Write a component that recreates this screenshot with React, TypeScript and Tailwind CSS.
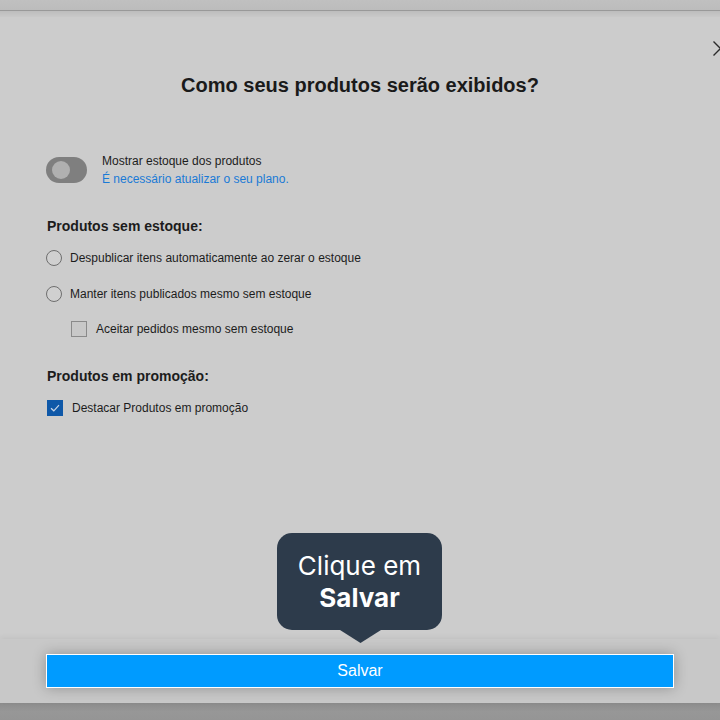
import React from "react";

export default function App() {
  return (
    <div className="relative w-[720px] h-[720px] overflow-hidden bg-[#cccccc] flex flex-col font-['Liberation_Sans',Arial,sans-serif] text-[#1c1c1c]">
      <div className="h-[10px] bg-gradient-to-b from-[#c0c0c0] to-[#bcbcbc]" />
      <div className="h-px bg-[#999999]" />
      <div className="h-[6px] bg-gradient-to-b from-[#bdbdbd] to-[#c9c9c9]" />

      <main className="relative flex-1 flex flex-col">
        <svg className="absolute left-[713px] top-[24px]" width="15" height="15" viewBox="0 0 15 15">
          <path d="M0.5 0.5 L14.5 14.5 M14.5 0.5 L0.5 14.5" stroke="#2a2a2a" strokeWidth="1.4" fill="none" />
        </svg>

        <h1 className="mt-[56px] h-[24px] leading-[24px] text-center text-[20px] font-bold text-[#1a1a1a]">
          Como seus produtos serão exibidos?
        </h1>

        <div className="mt-[55px] ml-[46px] flex items-center gap-[15px]">
          <div className="relative w-[41px] h-[26px] rounded-full bg-[#7f7f7f]">
            <div className="absolute left-[6px] top-[4px] w-[18px] h-[18px] rounded-full bg-[#b0b0b0]" />
          </div>
          <div className="flex flex-col text-[12px] leading-[18px]">
            <span>Mostrar estoque dos produtos</span>
            <span className="text-[#1a7ad6]">É necessário atualizar o seu plano.</span>
          </div>
        </div>

        <div className="mt-[28px] ml-[47px] h-[20px] leading-[20px] text-[14px] font-bold">
          Produtos sem estoque:
        </div>

        <div className="mt-[13px] ml-[46px] h-[18px] flex items-center gap-[8px] text-[12px]">
          <div className="w-[16px] h-[16px] rounded-full border border-[#6e6e6e] bg-[#d0d0d0]" />
          <span>Despublicar itens automaticamente ao zerar o estoque</span>
        </div>

        <div className="mt-[18px] ml-[46px] h-[18px] flex items-center gap-[8px] text-[12px]">
          <div className="w-[16px] h-[16px] rounded-full border border-[#6e6e6e] bg-[#d0d0d0]" />
          <span>Manter itens publicados mesmo sem estoque</span>
        </div>

        <div className="mt-[17px] ml-[71px] h-[18px] flex items-center gap-[9px] text-[12px]">
          <div className="w-[16px] h-[16px] border border-[#8a8a8a] bg-[#c8c8c8]" />
          <span>Aceitar pedidos mesmo sem estoque</span>
        </div>

        <div className="mt-[28px] ml-[47px] h-[20px] leading-[20px] text-[14px] font-bold">
          Produtos em promoção:
        </div>

        <div className="mt-[13px] ml-[47px] h-[18px] flex items-center gap-[9px] text-[12px]">
          <div className="w-[16px] h-[16px] bg-[#0e58a8] flex items-center justify-center">
            <svg width="10" height="8" viewBox="0 0 10 8">
              <path d="M1 4.2 L3.8 6.8 L9 1.2" stroke="#c9d6e8" strokeWidth="1.2" fill="none" />
            </svg>
          </div>
          <span>Destacar Produtos em promoção</span>
        </div>
      </main>

      <footer className="relative h-[64px] bg-[#c8c8c8] shadow-[0_-2px_5px_rgba(0,0,0,0.05)] flex items-start pt-[15px] px-[46px]">
        <button className="w-full h-[34px] bg-[#009bff] border border-white text-white text-[16px] shadow-[0_0_14px_rgba(0,0,0,0.28)] font-['Liberation_Sans',Arial,sans-serif]">
          Salvar
        </button>
      </footer>
      <div className="h-[17px] bg-gradient-to-b from-[#8c8c8c] via-[#979797] to-[#959595]" />

      <div className="absolute left-[277px] top-[533px] w-[165px] h-[97px] z-10">
        <div className="w-full h-full rounded-[15px] bg-[#2d3b4b] flex flex-col items-center justify-center text-white font-['Inter',sans-serif] text-[26px] leading-[32px]">
          <span>Clique em</span>
          <span className="font-bold">Salvar</span>
        </div>
        <svg className="absolute left-[63px] top-[97px]" width="41" height="13" viewBox="0 0 41 13">
          <path d="M0 0 L41 0 L20.5 13 Z" fill="#2d3b4b" />
        </svg>
      </div>
    </div>
  );
}
